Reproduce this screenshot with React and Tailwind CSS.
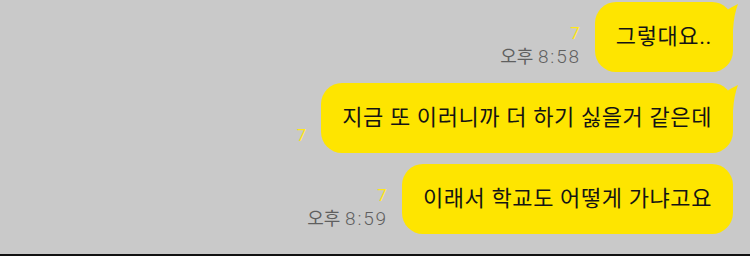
const messages = [
  { text: "그렇대요..", unread: "7", time: ["오후", "8:58"], tail: true, metaPad: "mb-[3px]" },
  { text: "지금 또 이러니까 더 하기 싫을거 같은데", unread: "7", tail: true, metaPad: "mb-[6px]" },
  { text: "이래서 학교도 어떻게 가냐고요", unread: "7", time: ["오후", "8:59"], tail: false, metaPad: "mb-[3px]" },
];

function Tail() {
  return (
    <svg className="absolute -right-[6px] top-0" width="26" height="30" viewBox="0 0 26 30">
      <path d="M4 16 Q12 8 25 2 Q21 12 20 28 L4 28 Z" fill="#fee500" />
    </svg>
  );
}

function Bubble({ msg }) {
  return (
    <div className="flex items-end justify-end gap-[14px]">
      <div className={`flex flex-col items-end ${msg.metaPad}`}>
        <span className="pr-[1px] text-[17px] leading-[24px] text-[#ffe61a]">{msg.unread}</span>
        {msg.time && (
          <span className="text-[19px] leading-[24px] text-[#5f5f5f]">
            <span className="text-[18px]">{msg.time[0]}</span>{" "}
            <span className="font-light tracking-[1.8px]">{msg.time[1]}</span>
          </span>
        )}
      </div>
      <div className="relative">
        {msg.tail && <Tail />}
        <div className="relative rounded-[21px] bg-[#fee500] px-[21px] py-[20px] text-[22px] leading-[30px] tracking-[0.6px] text-[#141414]">
          {msg.text}
        </div>
      </div>
    </div>
  );
}

export default function App() {
  return (
    <div
      className="flex h-[256px] w-[750px] flex-col bg-[#c9c9c9]"
      style={{ fontFamily: "Roboto, 'Noto Sans CJK KR', sans-serif" }}
    >
      <div className="flex flex-1 flex-col gap-[11px] pr-[17px] pt-[2px]">
        {messages.map((m, i) => (
          <Bubble key={i} msg={m} />
        ))}
      </div>
      <div className="h-[2px] bg-[#111111]" />
    </div>
  );
}
